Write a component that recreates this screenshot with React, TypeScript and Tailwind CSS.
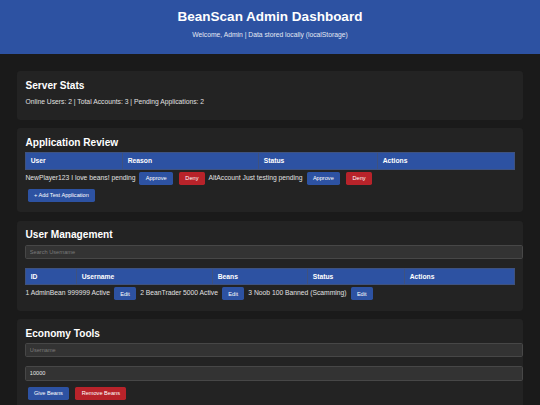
import React from "react";

function Btn({ color, children }: { color: "blue" | "red"; children: React.ReactNode }) {
  return (
    <button
      className={
        color === "blue"
          ? "inline-block m-[2.1px] px-[6.33px] py-[3.4px] rounded-[1.7px] text-[5.625px] leading-[normal] text-white bg-[#2d52a2] align-baseline"
          : "inline-block m-[2.1px] px-[6.33px] py-[3.4px] rounded-[1.7px] text-[5.625px] leading-[normal] text-white bg-[#b8232a] align-baseline"
      }
    >
      {children}
    </button>
  );
}

function Card({ title, children }: { title: string; children: React.ReactNode }) {
  return (
    <section className="m-[8.6px] p-[8.44px] rounded-[3.4px] bg-[#232323] flex flex-col">
      <h2 className="m-0 text-[10.125px] font-bold leading-[normal] text-white">{title}</h2>
      {children}
    </section>
  );
}

const thCls =
  "bg-[#2d52a2] border border-[#3e5280] px-[4.22px] py-[4.3px] text-left font-bold text-[6.75px] leading-[normal] text-white";

const inputCls =
  "box-content w-full h-[7.2px] px-[3.375px] py-[2.6px] my-[4.4px] bg-[#333333] border border-[#474747] rounded-[1.7px] text-[5.625px] leading-[normal] text-[#e6e6e6] placeholder:text-[#7a7a7a] outline-none";

export default function App() {
  return (
    <div className="min-h-screen bg-[#1a1a1a] text-[#e0e0e0] font-['Liberation_Sans',Arial,sans-serif] text-[6.75px] leading-[normal]">
      <header className="bg-[#2d52a2] px-[8.44px] pt-[8.6px] pb-[8.6px] text-center">
        <h1 className="m-0 text-[13.5px] font-bold leading-[normal] text-white">BeanScan Admin Dashboard</h1>
        <p className="mt-[7.6px] mb-[7.4px] text-[6.75px] leading-[normal] text-[#e3e8f3]">Welcome, Admin | Data stored locally (localStorage)</p>
      </header>
      <main className="p-[8.44px]">
        <Card title="Server Stats">
          <p className="my-[6.9px]">Online Users: 2 | Total Accounts: 3 | Pending Applications: 2</p>
        </Card>

        <Card title="Application Review">
          <table className="w-full table-fixed border-collapse mt-[4.3px]">
            <thead>
              <tr>
                <th className={`w-[97px] ${thCls}`}>User</th>
                <th className={`w-[136px] ${thCls}`}>Reason</th>
                <th className={`w-[119px] ${thCls}`}>Status</th>
                <th className={thCls}>Actions</th>
              </tr>
            </thead>
          </table>
          <div>
            {"NewPlayer123 I love beans! pending "}
            <Btn color="blue">Approve</Btn> <Btn color="red">Deny</Btn>
            {" AltAccount Just testing pending "}
            <Btn color="blue">Approve</Btn> <Btn color="red">Deny</Btn>
          </div>
          <div>
            <Btn color="blue">+ Add Test Application</Btn>
          </div>
        </Card>

        <Card title="User Management">
          <input className={inputCls} placeholder="Search Username" />
          <table className="w-full table-fixed border-collapse mt-[4.3px]">
            <thead>
              <tr>
                <th className={`w-[51px] ${thCls}`}>ID</th>
                <th className={`w-[136px] ${thCls}`}>Username</th>
                <th className={`w-[95px] ${thCls}`}>Beans</th>
                <th className={`w-[97px] ${thCls}`}>Status</th>
                <th className={thCls}>Actions</th>
              </tr>
            </thead>
          </table>
          <div>
            {"1 AdminBean 999999 Active "}
            <Btn color="blue">Edit</Btn>
            {" 2 BeanTrader 5000 Active "}
            <Btn color="blue">Edit</Btn>
            {" 3 Noob 100 Banned (Scamming) "}
            <Btn color="blue">Edit</Btn>
          </div>
        </Card>

        <Card title="Economy Tools">
          <input className={inputCls} placeholder="Username" />
          <input className={inputCls} defaultValue="10000" />
          <div>
            <Btn color="blue">Give Beans</Btn> <Btn color="red">Remove Beans</Btn>
          </div>
        </Card>
      </main>
    </div>
  );
}
